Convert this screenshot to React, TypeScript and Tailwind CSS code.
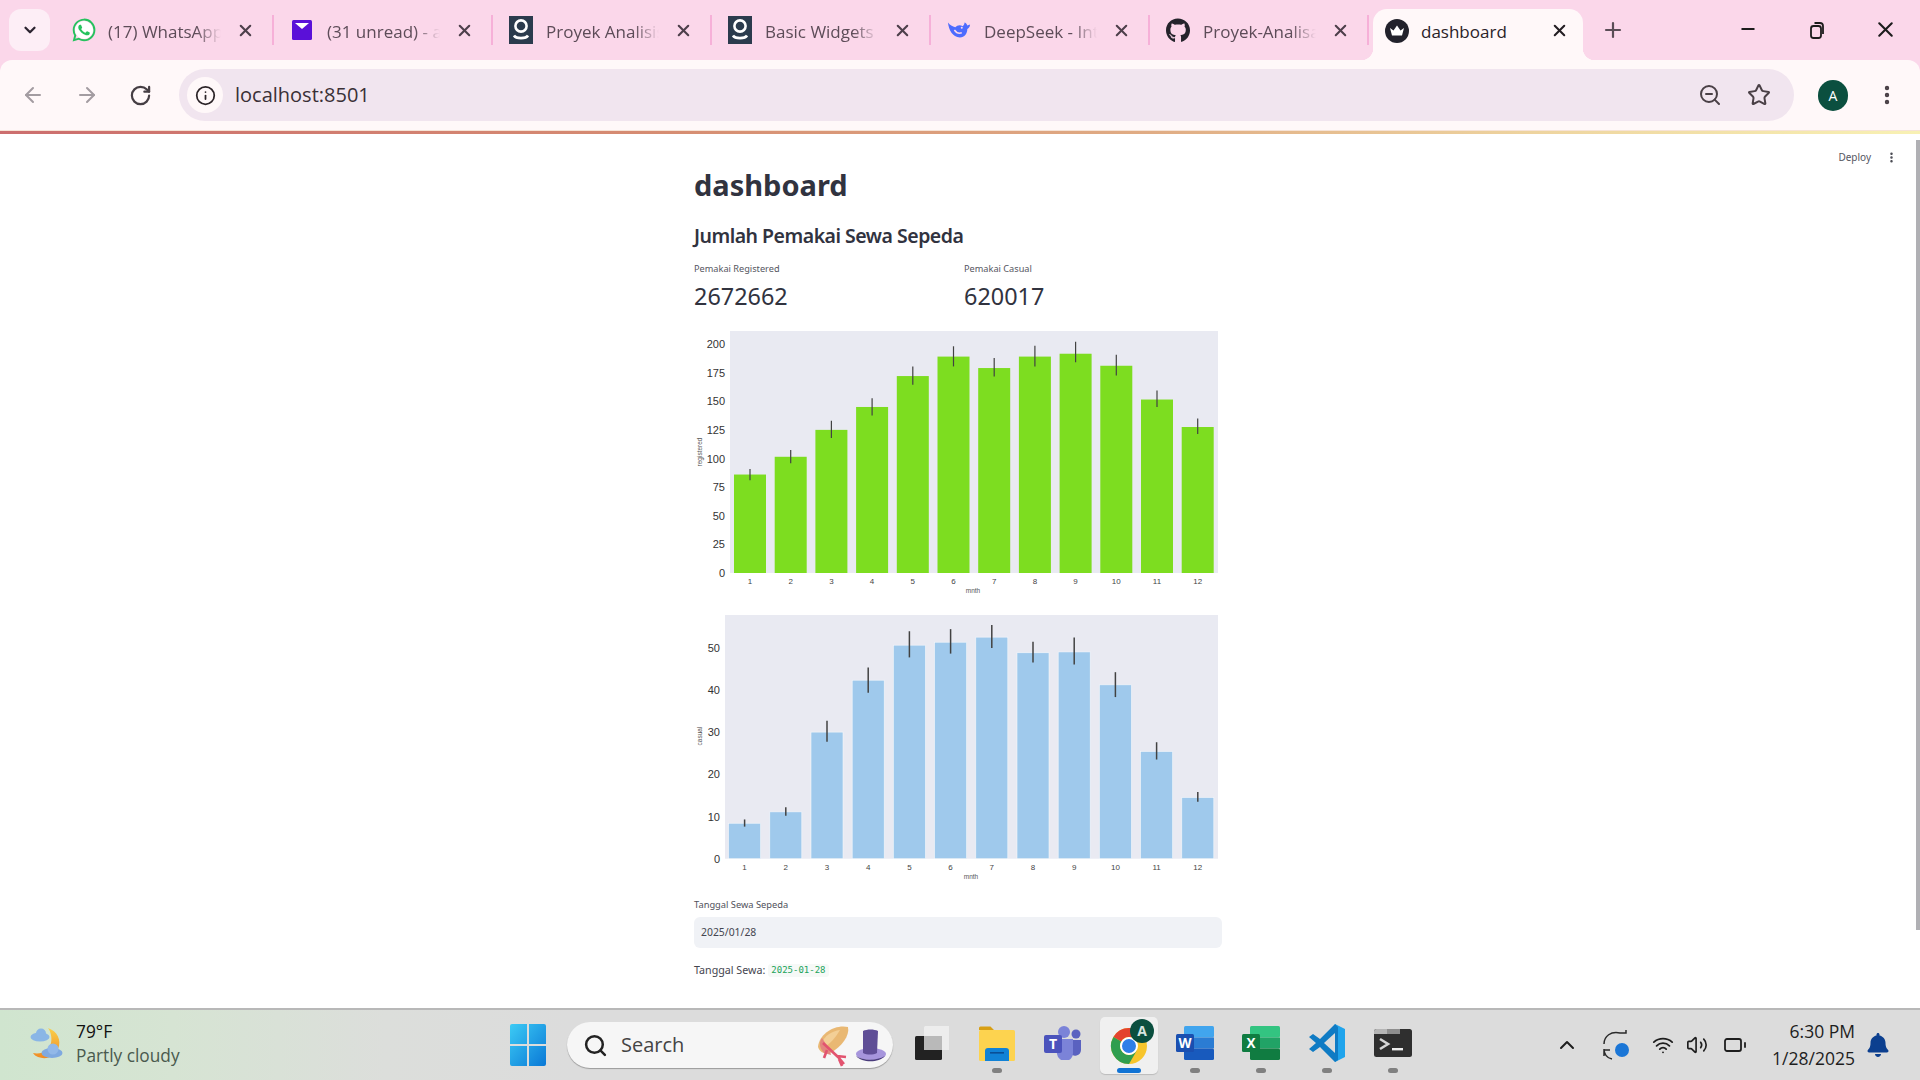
import { ArrowLeft, ArrowRight, Battery, ChevronDown, ChevronUp, EllipsisVertical, Info, Minus, Plus, RotateCw, Search, Star, Volume2, Wifi, X, ZoomOut } from "lucide-react";
import { FaBell, FaGithub } from "react-icons/fa";
import { IoLogoWhatsapp } from "react-icons/io5";
import type { ReactNode } from "react";

const MONTHS = [1, 2, 3, 4, 5, 6, 7, 8, 9, 10, 11, 12];

type ChartProps = {
  plotLeft: number;
  firstBar: number;
  step: number;
  baseline: number;
  scale: number;
  ticks: number[];
  values: number[];
  errs: number[][];
  color: string;
  label: string;
  labelY: number;
  mnthX: number;
  edge?: boolean;
  errWidth: number;
};

function BarChart({ plotLeft, firstBar, step, baseline, scale, ticks, values, errs, color, label, labelY, mnthX, edge, errWidth }: ChartProps) {
  return (
    <svg viewBox="0 0 524 266" className="block w-[524px] h-[266px]" fontFamily="'Liberation Sans', Arial, sans-serif">
      <rect x={plotLeft} y={0} width={524 - plotLeft} height={baseline} fill="#e9eaf2" />
      {values.map((v, i) => {
        const x = firstBar + i * step;
        return (
          <g key={i}>
            <rect x={x} y={baseline - v * scale} width={32} height={v * scale} fill={color} stroke={edge ? "#f4f7fb" : "none"} strokeWidth={0.6} />
            <line x1={x + 16} x2={x + 16} y1={baseline - errs[i][0] * scale} y2={baseline - errs[i][1] * scale} stroke="#424242" strokeWidth={errWidth} />
            <text x={x + 16} y={baseline + 11} textAnchor="middle" fontSize={8} fill="#444">{MONTHS[i]}</text>
          </g>
        );
      })}
      {ticks.map((t) => (
        <text key={t} x={plotLeft - 5} y={baseline - t * scale + 4} textAnchor="end" fontSize={11} fill="#333">{t}</text>
      ))}
      <text transform={`translate(8 ${labelY}) rotate(-90)`} textAnchor="middle" fontSize={6.5} fill="#555">{label}</text>
      <text x={mnthX} y={baseline + 20} textAnchor="middle" fontSize={6.5} fill="#555">mnth</text>
    </svg>
  );
}

function SquareNine() {
  return (
    <svg viewBox="0 0 24 28" className="w-[24px] h-[28px]">
      <rect width="24" height="28" fill="#2b3b4d" />
      <circle cx="12" cy="10" r="5.6" fill="none" stroke="#fff" strokeWidth="2.6" />
      <path d="M5 19.5c2 3.5 12 3.5 14 0" fill="none" stroke="#fff" strokeWidth="2.6" />
    </svg>
  );
}

function MailIcon() {
  return (
    <svg viewBox="0 0 24 24" className="w-[24px] h-[24px]">
      <rect x="2" y="2" width="20" height="20" rx="1.5" fill="#5a10d8" />
      <path d="M5 5h14l-7 6z" fill="#fff" />
    </svg>
  );
}

function DeepSeekIcon() {
  return (
    <svg viewBox="0 0 26 24" className="w-[26px] h-[24px]">
      <path d="M1 4c1 8 5 16 13 16 5 0 8-4 8-9 1-1 3-2 3-5l-3 1c-1-2-2-3-3-3 0 2-1 3-2 4-3-2-6-1-8 1C6 8 3 7 1 4z" fill="#4d6bfe" />
      <path d="M8 12c2 3 5 4 8 3" fill="none" stroke="#fbd7ea" strokeWidth="1.6" />
      <circle cx="16" cy="9.5" r="1.1" fill="#fbd7ea" />
    </svg>
  );
}

function CrownFavicon() {
  return (
    <svg viewBox="0 0 24 24" className="w-[24px] h-[24px]">
      <circle cx="12" cy="12" r="12" fill="#22222c" />
      <path d="M5 9l3.5 2.5L12 6.5l3.5 5L19 9l-2 7.5H7z" fill="#fff" />
    </svg>
  );
}

function WhatsAppIcon() {
  return (
    <div className="relative h-[26px] w-[26px]">
      <div className="absolute left-[4px] top-[4px] h-[18px] w-[18px] rounded-full bg-white" />
      <IoLogoWhatsapp className="absolute inset-0 text-[26px] text-[#25c25e]" />
    </div>
  );
}

const TABS: { title: string; icon: ReactNode }[] = [
  { title: "(17) WhatsApp", icon: <WhatsAppIcon /> },
  { title: "(31 unread) - a", icon: <MailIcon /> },
  { title: "Proyek Analisis", icon: <SquareNine /> },
  { title: "Basic Widgets", icon: <SquareNine /> },
  { title: "DeepSeek - Into", icon: <DeepSeekIcon /> },
  { title: "Proyek-Analisa", icon: <FaGithub className="text-[25px] text-[#24232b]" /> },
];

function TabStrip() {
  return (
    <div className="flex h-[60px] shrink-0 bg-[#fbd7ea] pl-[9px]">
      <div className="mt-[9px] flex h-[42px] w-[41px] items-center justify-center rounded-[12px] bg-[#fdeef6]">
        <ChevronDown size={18} strokeWidth={3} className="text-[#2b2430]" />
      </div>
      <div className="ml-[6px] flex">
        {TABS.map((tab) => (
          <div key={tab.title} className="flex h-[60px] w-[219px] items-center">
            <div className="ml-[15px] flex w-[24px] justify-center">{tab.icon}</div>
            <div className="ml-[13px] mt-[3px] w-[113px] overflow-hidden whitespace-nowrap text-[17px] text-[#5d4c58] [mask-image:linear-gradient(to_right,black_78%,transparent)]">
              {tab.title}
            </div>
            <X size={19} strokeWidth={2.6} className="ml-[15px] text-[#4d3f4a]" />
            <div className="ml-[17px] h-[30px] w-[2px] bg-[#f6b0d8]" />
          </div>
        ))}
      </div>
      <div className="relative ml-[3px] mt-[9px] flex h-[51px] w-[210px] items-center rounded-t-[14px] bg-[#fff8f9] pb-[8px]">
        <div className="absolute -left-[12px] bottom-0 h-[12px] w-[12px] bg-[radial-gradient(circle_at_0_0,transparent_12px,#fff8f9_12.5px)]" />
        <div className="absolute -right-[12px] bottom-0 h-[12px] w-[12px] bg-[radial-gradient(circle_at_100%_0,transparent_12px,#fff8f9_12.5px)]" />
        <div className="ml-[12px]"><CrownFavicon /></div>
        <span className="ml-[12px] mt-[3px] w-[129px] text-[17px] text-[#2a2228]">dashboard</span>
        <X size={19} strokeWidth={2.6} className="text-[#241e23]" />
      </div>
      <Plus size={24} strokeWidth={2.2} className="ml-[18px] mt-[18px] text-[#5a4d56]" />
      <div className="ml-auto flex h-[60px] items-start text-[#1c1c1c]">
        <Minus size={20} strokeWidth={2.2} className="mr-[49px] mt-[19px]" />
        <svg viewBox="0 0 20 20" className="mr-[46px] mt-[20px] h-[20px] w-[20px]" fill="none" stroke="#1c1c1c" strokeWidth="1.8">
          <rect x="4" y="6" width="10" height="12" rx="2.5" />
          <path d="M7.5 3h5.5a3 3 0 0 1 3 3v8" />
        </svg>
        <X size={25} strokeWidth={2} className="mr-[22px] mt-[17px]" />
      </div>
    </div>
  );
}

function Toolbar() {
  return (
    <div className="shrink-0 bg-[#fbd7ea]">
      <div className="flex h-[71px] items-center rounded-t-[12px] border-b border-[#f6e3d6] bg-[#fff8f9] pl-[21px]">
        <ArrowLeft size={24} strokeWidth={2} className="text-[#a39ca1]" />
        <ArrowRight size={24} strokeWidth={2} className="ml-[30px] text-[#a39ca1]" />
        <RotateCw size={23} strokeWidth={2.3} className="ml-[30px] text-[#463e44]" />
        <div className="ml-[27px] flex h-[52px] w-[1615px] items-center rounded-full bg-[#f1e5ef]">
          <div className="ml-[8px] flex h-[36px] w-[36px] items-center justify-center rounded-full bg-[#fff8f9]">
            <Info size={21} strokeWidth={2} className="text-[#2c2428]" />
          </div>
          <span className="ml-[12px] text-[20px] text-[#3a3036]">localhost:8501</span>
          <ZoomOut size={24} strokeWidth={2} className="ml-auto text-[#4a4046]" />
          <Star size={24} strokeWidth={2} className="ml-[25px] mr-[23px] text-[#4a4046]" />
        </div>
        <div className="ml-[24px] flex h-[31px] w-[30px] items-center justify-center rounded-full bg-[#0b4f3f] text-[14px] text-white">A</div>
        <EllipsisVertical size={24} strokeWidth={2.4} className="ml-[27px] text-[#4a4046]" />
      </div>
      <div className="h-[3px] bg-[linear-gradient(90deg,#cc6e6e_0%,#d68d72_35%,#e0ac84_60%,#eed49f_80%,#f8f1b4_100%)]" />
    </div>
  );
}

function Dashboard() {
  return (
    <main className="relative flex min-h-0 flex-1 bg-white font-['Noto_Sans',sans-serif] text-[#31333f]">
      <div className="absolute right-[22px] top-[16px] flex items-center">
        <span className="text-[10px] text-[#55565f]">Deploy</span>
        <EllipsisVertical size={13} strokeWidth={2.6} className="ml-[14px] text-[#44454e]" />
      </div>
      <div className="min-w-0 flex-1 pt-[33px]">
        <div className="mx-auto w-[528px]">
          <h1 className="h-[36px] text-[29px] font-bold leading-[36px]">dashboard</h1>
          <h2 className="mt-[20px] h-[26px] text-[19.5px] font-semibold leading-[26px] tracking-[-0.5px]">Jumlah Pemakai Sewa Sepeda</h2>
          <div className="mt-[13px] grid grid-cols-[270px_1fr]">
            <div>
              <div className="h-[14px] text-[9.2px] leading-[14px] text-[#55565f]">Pemakai Registered</div>
              <div className="mt-[3px] h-[34px] text-[23.4px] leading-[34px]">2672662</div>
            </div>
            <div>
              <div className="h-[14px] text-[9.2px] leading-[14px] text-[#55565f]">Pemakai Casual</div>
              <div className="mt-[3px] h-[34px] text-[23.4px] leading-[34px]">620017</div>
            </div>
          </div>
          <div className="mt-[18px]">
            <BarChart
              plotLeft={36}
              firstBar={40}
              step={40.7}
              baseline={242}
              scale={1.145}
              ticks={[0, 25, 50, 75, 100, 125, 150, 175, 200]}
              values={[86, 101.5, 125, 145, 172, 189, 179, 189, 191.5, 181, 151.5, 127.5]}
              errs={[[90.8, 81], [107.4, 95.8], [133, 118], [152.7, 137.5], [180.4, 164.4], [198, 180.4], [187.7, 171.7], [198.5, 180.4], [202, 184], [190.7, 172.5], [159.4, 145], [135, 121.5]]}
              color="#7ddd20"
              label="registered"
              labelY={121}
              mnthX={279}
              errWidth={1.2}
            />
          </div>
          <div className="mt-[18px]">
            <BarChart
              plotLeft={31}
              firstBar={34.6}
              step={41.2}
              baseline={243.7}
              scale={4.22}
              ticks={[0, 10, 20, 30, 40, 50]}
              values={[8.4, 11.1, 30, 42.3, 50.6, 51.3, 52.5, 48.8, 49, 41.2, 25.4, 14.5]}
              errs={[[9.3, 7.6], [12.2, 10.2], [32.7, 27.7], [45.3, 39.3], [53.9, 47.7], [54.4, 48.6], [55.4, 49.9], [51.4, 46.5], [52.4, 46], [44.2, 38.3], [27.6, 23.5], [15.8, 13.5]]}
              color="#9fc9ec"
              label="casual"
              labelY={121}
              mnthX={277}
              edge
              errWidth={1.5}
            />
          </div>
          <div className="mt-[17px] h-[14px] text-[9.3px] leading-[14px] text-[#50515b]">Tanggal Sewa Sepeda</div>
          <div className="mt-[5px] flex h-[31px] items-center rounded-[6px] bg-[#f0f2f6] pl-[7px] text-[10.4px] text-[#444650]">2025/01/28</div>
          <div className="mt-[12px] flex h-[20px] items-center text-[10.7px] text-[#44454f]">
            <span>Tanggal Sewa:</span>
            <code className="ml-[3px] mt-[1px] rounded-[3px] bg-[#f6f9f7] px-[3px] font-['DejaVu_Sans_Mono',monospace] text-[9px] text-[#21a35a]">2025-01-28</code>
          </div>
        </div>
      </div>
      <div className="w-[4px] shrink-0">
        <div className="mt-[6px] h-[790px] bg-[#b0b0b4]" />
      </div>
    </main>
  );
}

function WeatherIcon() {
  return (
    <svg viewBox="0 0 40 40" className="h-[40px] w-[40px]">
      <defs>
        <linearGradient id="moon" x1="0" y1="0" x2="0" y2="1">
          <stop offset="0" stopColor="#f9d04a" />
          <stop offset="1" stopColor="#f08a24" />
        </linearGradient>
      </defs>
      <path d="M20 3c9 3 14 12 10 21-3 8-12 11-20 8-2-1-4-2-5-4 9 2 16-3 18-10 1-5 0-11-3-15z" fill="url(#moon)" />
      <ellipse cx="12" cy="12" rx="9.5" ry="4.5" fill="#8ab6e6" />
      <circle cx="13" cy="8.5" r="5" fill="#8ab6e6" />
      <ellipse cx="24" cy="28" rx="10.5" ry="5" fill="#7fa9e0" />
      <circle cx="25" cy="24" r="5.5" fill="#92b8e8" />
    </svg>
  );
}

function WindowsLogo() {
  return (
    <svg viewBox="0 0 36 42" className="h-[42px] w-[36px]">
      <defs>
        <linearGradient id="win" x1="0" y1="0" x2="1" y2="1">
          <stop offset="0" stopColor="#3ccbf5" />
          <stop offset="1" stopColor="#0a78d6" />
        </linearGradient>
      </defs>
      <path d="M0 2a2 2 0 0 1 2-2h15v20H0zM19 0h15a2 2 0 0 1 2 2v18H19zM0 22h17v20H2a2 2 0 0 1-2-2zM19 22h17v18a2 2 0 0 1-2 2H19z" fill="url(#win)" />
    </svg>
  );
}

function BonnetHat() {
  return (
    <svg viewBox="0 0 72 44" className="h-[44px] w-[72px]">
      <path d="M2 24C3 10 20 1 32 4c2 8-6 20-18 26-5 1-10 0-12-6z" fill="#e9b873" />
      <path d="M6 20c2-7 10-12 18-13-4 7-10 14-17 18z" fill="#f3cf96" />
      <path d="M8 30C3 25 3 19 6 15c4 6 8 12 9 17z" fill="#e3867f" />
      <path d="M7 20l15 14 6 7M11 27l-3 8M21 33l9 1M23 36l3 7" stroke="#e2536f" strokeWidth="2.6" fill="none" />
      <ellipse cx="55" cy="31" rx="15" ry="6" fill="#a695dc" />
      <path d="M47 8c4-2 11-2 15 0l-1 22c-4 2-10 2-14 0z" fill="#5f4e96" />
      <path d="M40 33c8 5 20 5 29 0-6 7-23 7-29 0z" fill="#4a3c7c" />
    </svg>
  );
}

function TaskViewIcon() {
  return (
    <svg viewBox="0 0 36 36" className="h-[36px] w-[36px]">
      <rect x="2" y="11" width="27" height="24" rx="1.5" fill="#222" />
      <rect x="11" y="1" width="26" height="24" rx="1.5" fill="#f1f1f1" opacity="0.8" />
      <rect x="11" y="11" width="18" height="14" fill="#b9b9b9" />
    </svg>
  );
}

function ExplorerIcon() {
  return (
    <svg viewBox="0 0 36 36" className="h-[36px] w-[36px]">
      <path d="M0 3a1.5 1.5 0 0 1 1.5-1.5h10L15 5H0z" fill="#d89f14" />
      <rect y="5" width="36" height="31" rx="1.5" fill="#fdd34f" />
      <path d="M6 36V26a3 3 0 0 1 3-3h18a3 3 0 0 1 3 3v10z" fill="#1182d6" />
      <rect x="11" y="27" width="14" height="1.6" fill="#0a4f96" />
    </svg>
  );
}

function TeamsIcon() {
  return (
    <svg viewBox="0 0 38 34" className="h-[34px] w-[38px]">
      <circle cx="20" cy="6" r="6" fill="#7b83d8" />
      <circle cx="32" cy="8" r="4.5" fill="#5a62c0" />
      <path d="M26 14h11v10a6 6 0 0 1-11 3z" fill="#5a62c0" />
      <path d="M11 13h18v13a8 8 0 0 1-16 2z" fill="#7b83d8" />
      <rect y="9" width="18" height="18" rx="2" fill="#4b53bc" />
      <text x="9" y="23" textAnchor="middle" fontSize="14" fontWeight="700" fill="#fff" fontFamily="'Open Sans', sans-serif">T</text>
    </svg>
  );
}

function ChromeIcon() {
  return (
    <svg viewBox="0 0 48 48" className="ml-[5px] h-[48px] w-[48px]">
      <circle cx="21" cy="27" r="18" fill="#f7c52c" />
      <path d="M21 9a18 18 0 0 1 15.6 9H21a9 9 0 0 0-7.8 4.5L5.4 18A18 18 0 0 1 21 9z" fill="#e3432f" />
      <path d="M5.4 18A18 18 0 0 0 21 45l7.8-13.5a9 9 0 0 1-15.6-9z" fill="#2f9e4f" />
      <circle cx="21" cy="27" r="8" fill="#2f7fe8" stroke="#fff" strokeWidth="2" />
      <circle cx="34" cy="12" r="12" fill="#0b4f3f" />
      <text x="34" y="17" textAnchor="middle" fontSize="14" fontWeight="700" fill="#d7e4df" fontFamily="'Open Sans', sans-serif">A</text>
    </svg>
  );
}

function OfficeIcon({ letter, colors, badge }: { letter: string; colors: string[]; badge: string }) {
  return (
    <svg viewBox="0 0 38 34" className="h-[34px] w-[38px]">
      <rect x="8" y="0" width="30" height="11.5" rx="1.5" fill={colors[0]} />
      <rect x="8" y="11.5" width="30" height="11" fill={colors[1]} />
      <rect x="8" y="22.5" width="30" height="11.5" rx="1.5" fill={colors[2]} />
      <rect x="0" y="8" width="18" height="18" rx="1.5" fill={badge} />
      <text x="9" y="22" textAnchor="middle" fontSize="13.5" fontWeight="700" fill="#fff" fontFamily="'Open Sans', sans-serif">{letter}</text>
    </svg>
  );
}

function VsCodeIcon() {
  return (
    <svg viewBox="0 0 36 38" className="h-[38px] w-[36px]">
      <path d="M26 0l10 5v28l-10 5z" fill="#20a4ec" />
      <path d="M26 0L11 15 4 10 0 13l7 6-7 6 4 3 7-5 15 15 3-2V3z" fill="#0f7bc4" />
      <path d="M26 9L15 19l11 10z" fill="#dcdcdc" />
    </svg>
  );
}

function TerminalIcon() {
  return (
    <svg viewBox="0 0 38 28" className="h-[28px] w-[38px]">
      <rect width="38" height="28" rx="2.5" fill="#2f2f2f" />
      <path d="M0 2.5A2.5 2.5 0 0 1 2.5 0H13v5H0z" fill="#b5b5b5" />
      <rect x="13" y="0" width="13" height="5" fill="#8e8e8e" />
      <path d="M6 10l8 5-8 5" stroke="#d6d6d6" strokeWidth="2.6" fill="none" />
      <rect x="18" y="19" width="11" height="2.4" fill="#eee" />
    </svg>
  );
}

function SyncIcon() {
  return (
    <svg viewBox="0 0 28 32" className="h-[32px] w-[28px]" fill="none" stroke="#2a2a2a" strokeWidth="1.5">
      <path d="M2 15C2 7 9 2 18 4l6 0V1" />
      <path d="M2 20c0 5 3 9 8 10M2 27v-6h6" />
      <circle cx="20" cy="21" r="7" fill="#1b76d6" stroke="none" />
    </svg>
  );
}

function AppButton({ children, dot = true, active }: { children: ReactNode; dot?: boolean; active?: boolean }) {
  return (
    <div className="relative flex h-full w-[66px] items-center justify-center pb-[4px]">
      {active && (
        <div className="absolute left-[4px] top-[7px] h-[57px] w-[58px] rounded-[5px] bg-[#f0f0f0] shadow-[0_1px_1px_rgba(0,0,0,0.15)]" />
      )}
      <div className="relative flex items-center justify-center">{children}</div>
      {active && <div className="absolute bottom-[7px] left-[21px] h-[5px] w-[24px] rounded-full bg-[#1173d4]" />}
      {dot && !active && <div className="absolute bottom-[7px] left-[28px] h-[5px] w-[10px] rounded-full bg-[#808080]" />}
    </div>
  );
}

function Taskbar() {
  return (
    <footer className="flex h-[72px] shrink-0 items-center border-t-2 border-[#b8b8b8] bg-[linear-gradient(90deg,#d0e5cf_0%,#d6e4d3_9%,#dcdedb_20%,#dcdcdc_30%)] font-['Open_Sans',sans-serif]">
      <div className="ml-[28px] flex w-[482px] items-center">
        <WeatherIcon />
        <div className="ml-[8px] pb-[2px] text-[17.3px] leading-[24px]">
          <div className="text-[#111]">79°F</div>
          <div className="text-[#4a5a4e]">Partly cloudy</div>
        </div>
      </div>
      <WindowsLogo />
      <div className="ml-[21px] flex h-[46px] w-[326px] items-center rounded-full bg-[#f6f6f6] shadow-[0_1px_1px_rgba(0,0,0,0.3)]">
        <Search size={25} strokeWidth={2.4} className="ml-[16px] text-[#222]" />
        <span className="ml-[13px] text-[20px] text-[#444]">Search</span>
        <div className="ml-auto mr-[5px]"><BonnetHat /></div>
      </div>
      <div className="ml-[5px] flex h-full">
        <AppButton dot={false}><TaskViewIcon /></AppButton>
        <AppButton><ExplorerIcon /></AppButton>
        <AppButton dot={false}><TeamsIcon /></AppButton>
        <AppButton active><ChromeIcon /></AppButton>
        <AppButton><OfficeIcon letter="W" colors={["#41a5ee", "#2b7cd3", "#185abd"]} badge="#1a4fb0" /></AppButton>
        <AppButton><OfficeIcon letter="X" colors={["#33c481", "#21a366", "#107c41"]} badge="#107c41" /></AppButton>
        <AppButton><VsCodeIcon /></AppButton>
        <AppButton><TerminalIcon /></AppButton>
      </div>
      <div className="ml-auto flex items-center pr-[30px] text-[#1e1e1e]">
        <ChevronUp size={24} strokeWidth={2} />
        <div className="ml-[23px]"><SyncIcon /></div>
        <Wifi size={22} strokeWidth={2} className="ml-[22px]" />
        <Volume2 size={22} strokeWidth={1.8} className="ml-[12px]" />
        <Battery size={24} strokeWidth={1.8} className="ml-[15px]" />
        <div className="ml-[8px] w-[100px] text-right text-[17.5px] leading-[27px]">
          <div>6:30 PM</div>
          <div>1/28/2025</div>
        </div>
        <FaBell className="ml-[11px] text-[24px] text-[#0c3f8f]" />
      </div>
    </footer>
  );
}

export default function App() {
  return (
    <div className="flex h-screen w-full flex-col overflow-hidden font-['Open_Sans',sans-serif]">
      <TabStrip />
      <Toolbar />
      <Dashboard />
      <Taskbar />
    </div>
  );
}
